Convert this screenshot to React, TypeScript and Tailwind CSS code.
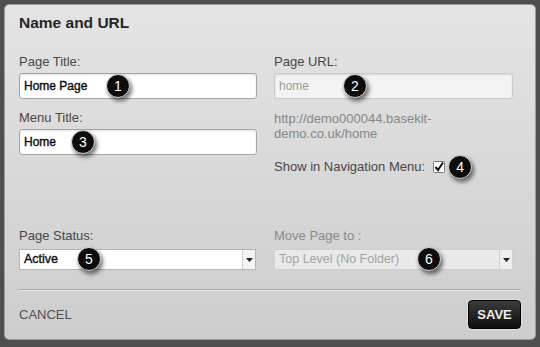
import type { ReactNode } from "react";

const FONT = { fontFamily: '"Liberation Sans", Arial, Helvetica, sans-serif' };

function Badge({ n, className }: { n: number; className: string }) {
  return (
    <span
      className={`absolute flex h-[24px] w-[24px] items-center justify-center rounded-full border-[1.5px] border-[#d8d8d8] bg-[#0d0d0d] text-[14px] leading-none text-white shadow-[2px_3px_4px_rgba(0,0,0,0.55)] ${className}`}
    >
      {n}
    </span>
  );
}

function Label({ children, muted }: { children: ReactNode; muted?: boolean }) {
  return (
    <div className={`h-[16px] text-[13px] leading-[16px] ${muted ? "text-[#8a8a8a]" : "text-[#474747]"}`}>
      {children}
    </div>
  );
}

function TextInput({ value, disabled }: { value: string; disabled?: boolean }) {
  return (
    <div
      className={`flex h-[26px] items-center rounded-[3px] border px-[4px] shadow-[inset_0_1px_2px_rgba(0,0,0,0.12)] ${
        disabled
          ? "border-[#c9c9c9] bg-[#f3f3f3] text-[12px] text-[#9a9a9a]"
          : "border-[#a5a5a5] bg-white text-[12px] text-[#111] [-webkit-text-stroke:0.4px_#111]"
      }`}
    >
      {value}
    </div>
  );
}

function Select({ value, disabled }: { value: string; disabled?: boolean }) {
  return (
    <div
      className={`flex h-[21px] items-center justify-between border ${
        disabled ? "border-[#cfcfcf] bg-[#e9e9e9]" : "border-[#b5b5b5] bg-white"
      }`}
    >
      <span
        className={`pl-[4px] ${
          disabled
            ? "text-[12.5px] text-[#a3a3a3]"
            : "text-[12.5px] text-[#111] [-webkit-text-stroke:0.4px_#111]"
        }`}
      >
        {value}
      </span>
      <span
        className={`flex h-full w-[13px] items-center justify-center border-l border-[#d0d0d0] ${
          disabled ? "bg-[#eeeeee]" : "bg-[#f4f4f4]"
        }`}
      >
        <svg width="7" height="4" viewBox="0 0 7 4">
          <path d="M0 0h7L3.5 4z" fill="#222" />
        </svg>
      </span>
    </div>
  );
}

export default function App() {
  return (
    <div className="h-[347px] w-[540px] bg-[#4f4f4f] pl-[4px] pt-[4px]" style={FONT}>
      <div className="flex h-[336px] w-[532px] flex-col rounded-[5px] border border-[#9c9c9c] bg-gradient-to-b from-[#e4e4e4] to-[#cdcdcd] pl-[14px] pr-[15px]">
        <h1 className="mt-[8px] h-[20px] text-[15.5px] font-bold leading-[20px] text-[#262626]">
          Name and URL
        </h1>

        <div className="mt-[21px] grid w-[494px] grid-cols-[238px_239px] gap-x-[17px]">
          <div>
            <Label>Page Title:</Label>
            <div className="relative mt-[3px]">
              <TextInput value="Home Page" />
              <Badge n={1} className="left-[87px] top-[1px]" />
            </div>
            <div className="mt-[11px]">
              <Label>Menu Title:</Label>
            </div>
            <div className="relative mt-[3px]">
              <TextInput value="Home" />
              <Badge n={3} className="left-[52px] top-[1px]" />
            </div>
          </div>

          <div>
            <Label>Page URL:</Label>
            <div className="relative mt-[3px]">
              <TextInput value="home" disabled />
              <Badge n={2} className="left-[69px] top-[1px]" />
            </div>
            <div className="mt-[12px] text-[13px] leading-[15px] text-[#868686]">
              http://demo000044.basekit-
              <br />
              demo.co.uk/home
            </div>
            <div className="mt-[18px] flex h-[16px] items-center text-[13px] text-[#474747]">
              <span>Show in Navigation Menu:</span>
              <span className="relative ml-[8px] flex items-center">
                <svg width="12" height="12" viewBox="0 0 12 12">
                  <rect x="0.5" y="0.5" width="11" height="11" rx="1" fill="#fff" stroke="#7a7a7a" />
                  <path d="M2.5 6l2.5 3 5-7.5" fill="none" stroke="#111" strokeWidth="2" />
                </svg>
                <Badge n={4} className="left-[15px] top-[-6px]" />
              </span>
            </div>
          </div>
        </div>

        <div className="mt-[53px] grid w-[494px] grid-cols-[237px_239px] gap-x-[18px]">
          <div>
            <Label>Page Status:</Label>
            <div className="relative mt-[5px]">
              <Select value="Active" />
              <Badge n={5} className="left-[58px] top-[-2px]" />
            </div>
          </div>
          <div>
            <Label muted>Move Page to :</Label>
            <div className="relative mt-[5px]">
              <Select value="Top Level (No Folder)" disabled />
              <Badge n={6} className="left-[143px] top-[-2px]" />
            </div>
          </div>
        </div>

        <div className="mt-[19px] h-[2px] w-[502px] border-t border-[#a8a8a8] border-b-white/50 border-b" />

        <div className="mt-[9px] flex w-[502px] items-center justify-between">
          <span className="text-[13px] text-[#505050]">CANCEL</span>
          <button
            type="button"
            className="flex h-[29px] w-[53px] items-center justify-center rounded-[4px] border border-black bg-gradient-to-b from-[#3c3c3c] to-[#0f0f0f] text-[13px] font-bold text-[#ececec] shadow-[0_0_0_1px_rgba(255,255,255,0.35)]"
          >
            SAVE
          </button>
        </div>
      </div>
    </div>
  );
}
